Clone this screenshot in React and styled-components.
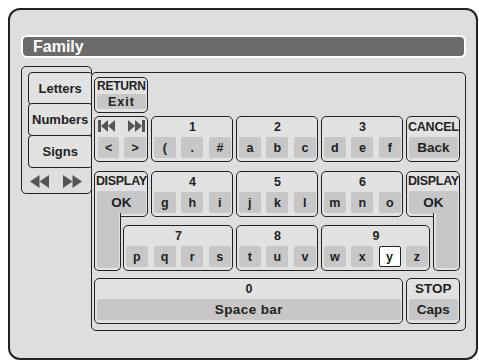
import styled, { createGlobalStyle } from "styled-components"

const GlobalStyle = createGlobalStyle`
  body {
    margin: 0;
    background: #ffffff;
    font-family: "Liberation Sans", Arial, sans-serif;
  }
`

const Frame = styled.div`
  box-sizing: border-box;
  margin: 8px;
  width: 470px;
  height: 352px;
  border: 2px solid #222;
  border-radius: 12px;
  background: #dedede;
  padding: 25px 10px 0 11px;
`
const TitleBar = styled.div`
  box-sizing: border-box;
  height: 23px;
  border: 2px solid #ffffff;
  border-radius: 6px;
  background: #6b6b6b;
  color: #ffffff;
  font-size: 16px;
  font-weight: bold;
  padding-left: 10px;
  display: flex;
  align-items: center;
`
const Body = styled.div`
  display: flex;
  align-items: flex-start;
  margin-top: 8px;
`
const TabPanel = styled.div`
  box-sizing: border-box;
  width: 71.5px;
  height: 128px;
  border: 1.5px solid #222;
  border-radius: 5px;
  padding: 4.5px 0 0 5.5px;
  display: flex;
  flex-direction: column;
`
const Tab = styled.div`
  box-sizing: border-box;
  height: 33px;
  margin-right: -1.5px;
  border: 1.5px solid #222;
  border-radius: 4px;
  background: #e2e2e2;
  display: flex;
  align-items: center;
  justify-content: center;
  font-size: 13px;
  font-weight: bold;
  color: #222;
  & + & {
    margin-top: -1.5px;
  }
`
const Arrows = styled.div`
  display: flex;
  gap: 14px;
  margin: 7px 0 0 2px;
`
const KbPanel = styled.div`
  position: relative;
  box-sizing: border-box;
  width: 376px;
  height: 259px;
  margin: 6px 0 0 -1.5px;
  border: 1.5px solid #222;
  border-radius: 5px;
  background: #dedede;
  padding: 3.5px 0 0 2.5px;
  display: grid;
  grid-template-columns: 26px 25px 82px 82px 82px 24px 27px;
  grid-template-rows: 36px 46px 52px 51px 50px;
  gap: 3px;
`
const Key = styled.div`
  grid-column: ${p => p.$col};
  grid-row: ${p => p.$row};
  align-self: end;
  height: ${p => p.$h || 46}px;
  box-sizing: border-box;
  border: 1.5px solid #222;
  border-radius: 5px;
  background: #e2e2e2;
  display: flex;
  flex-direction: column;
  padding: 0 1.5px 2.5px;
  color: #222;
`
const Label = styled.div`
  flex: 1;
  display: flex;
  align-items: center;
  justify-content: center;
  font-size: ${p => p.$size || 12.5}px;
  font-weight: bold;
  letter-spacing: ${p => p.$ls || 0}px;
  white-space: nowrap;
`
const SubRow = styled.div`
  display: flex;
  justify-content: space-between;
  gap: ${p => p.$gap || 0}px;
  height: 21px;
  padding-left: ${p => p.$pl || 0}px;
`
const Sub = styled.div`
  box-sizing: border-box;
  width: 22px;
  flex: ${p => (p.$grow ? 1 : "none")};
  border-radius: 2px;
  background: ${p => (p.$active ? "#ffffff" : "#c7c7c7")};
  border: ${p => (p.$active ? "1.5px solid #222" : "none")};
  display: flex;
  align-items: center;
  justify-content: center;
  font-size: 12.5px;
  font-weight: bold;
  color: #222;
`
const Pad = styled.div`
  height: ${p => p.$h || 21}px;
  border-radius: 2px;
  background: #c7c7c7;
  display: flex;
  align-items: center;
  justify-content: center;
  font-size: ${p => p.$size || 13.5}px;
  font-weight: bold;
  letter-spacing: ${p => p.$ls || 0}px;
  color: #222;
`
const IconRow = styled.div`
  flex: 1;
  display: flex;
  justify-content: space-between;
  align-items: center;
  padding: 0 1px 1px 1.5px;
`

/* L-shaped DISPLAY key */
const LWrap = styled.div`
  grid-column: ${p => p.$col};
  grid-row: 3 / 5;
  align-self: end;
  height: 100px;
  display: flex;
  flex-direction: column;
  align-items: ${p => (p.$side === "left" ? "flex-start" : "flex-end")};
  color: #222;
`
const LTop = styled.div`
  position: relative;
  box-sizing: border-box;
  width: 100%;
  height: 46px;
  border: 1.5px solid #222;
  border-radius: ${p => (p.$side === "left" ? "5px 5px 5px 0" : "5px 5px 0 5px")};
  background: #e2e2e2;
  display: flex;
  flex-direction: column;
  padding: 0 1.5px 2px;
`
const LTopPad = styled.div`
  height: 22.5px;
  background: #c7c7c7;
  border-radius: ${p => (p.$side === "left" ? "2px 2px 3px 0" : "2px 2px 0 3px")};
  display: flex;
  align-items: center;
  justify-content: center;
  font-size: 13.5px;
  font-weight: bold;
`
const LStem = styled.div`
  position: relative;
  z-index: 1;
  box-sizing: border-box;
  width: 27px;
  flex: 1;
  margin-top: -3.5px;
  border: 1.5px solid #222;
  border-top: none;
  border-radius: 0 0 5px 5px;
  background: #e2e2e2;
  padding: 0 1.5px 1.5px;
  display: flex;
`
const LStemPad = styled.div`
  flex: 1;
  background: #c7c7c7;
  border-radius: 0 0 2px 2px;
`

const DoubleArrow = ({ dir }) => (
  <svg width="19" height="13" viewBox="0 0 19 13">
    {dir === "left" ? (
      <>
        <polygon points="9.5,0 0,6.5 9.5,13" fill="#555" />
        <polygon points="19,0 9.5,6.5 19,13" fill="#555" />
      </>
    ) : (
      <>
        <polygon points="0,0 9.5,6.5 0,13" fill="#555" />
        <polygon points="9.5,0 19,6.5 9.5,13" fill="#555" />
      </>
    )}
  </svg>
)

const SkipIcon = ({ dir }) => (
  <svg width="17" height="12" viewBox="0 0 17 12">
    {dir === "back" ? (
      <>
        <rect x="0" y="0" width="3" height="12" fill="#555" />
        <polygon points="10,0 3,6 10,12" fill="#555" />
        <polygon points="17,0 10,6 17,12" fill="#555" />
      </>
    ) : (
      <>
        <polygon points="0,0 7,6 0,12" fill="#555" />
        <polygon points="7,0 14,6 7,12" fill="#555" />
        <rect x="14" y="0" width="3" height="12" fill="#555" />
      </>
    )}
  </svg>
)

const NumKey = ({ col, row, num, chars, active }) => (
  <Key $col={col} $row={row}>
    <Label>{num}</Label>
    <SubRow>
      {chars.map(c => (
        <Sub key={c} $active={c === active}>{c}</Sub>
      ))}
    </SubRow>
  </Key>
)

const DisplayKey = ({ side, col }) => (
  <LWrap $side={side} $col={col}>
    <LTop $side={side}>
      <Label $size={12.5} $ls={-0.3}>DISPLAY</Label>
      <LTopPad $side={side}>OK</LTopPad>
    </LTop>
    <LStem>
      <LStemPad />
    </LStem>
  </LWrap>
)

const App = () => {
  return (
    <>
      <GlobalStyle />
      <Frame>
        <TitleBar>Family</TitleBar>
        <Body>
          <TabPanel>
            <Tab>Letters</Tab>
            <Tab>Numbers</Tab>
            <Tab>Signs</Tab>
            <Arrows>
              <DoubleArrow dir="left" />
              <DoubleArrow dir="right" />
            </Arrows>
          </TabPanel>
          <KbPanel>
            <Key $col="1 / 3" $row="1" $h={36}>
              <Label $size={12} $ls={-0.2}>RETURN</Label>
              <Pad $h={15} $size={12.5} $ls={1}>Exit</Pad>
            </Key>

            <Key $col="1 / 3" $row="2">
              <IconRow>
                <SkipIcon dir="back" />
                <SkipIcon dir="fwd" />
              </IconRow>
              <SubRow $gap={5} $pl={1}>
                <Sub $grow>&lt;</Sub>
                <Sub $grow>&gt;</Sub>
              </SubRow>
            </Key>
            <NumKey col="3" row="2" num="1" chars={["(", ".", "#"]} />
            <NumKey col="4" row="2" num="2" chars={["a", "b", "c"]} />
            <NumKey col="5" row="2" num="3" chars={["d", "e", "f"]} />
            <Key $col="6 / 8" $row="2">
              <Label $size={12.5} $ls={-0.2}>CANCEL</Label>
              <Pad>Back</Pad>
            </Key>

            <DisplayKey side="left" col="1 / 3" />
            <NumKey col="3" row="3" num="4" chars={["g", "h", "i"]} />
            <NumKey col="4" row="3" num="5" chars={["j", "k", "l"]} />
            <NumKey col="5" row="3" num="6" chars={["m", "n", "o"]} />
            <DisplayKey side="right" col="6 / 8" />

            <NumKey col="2 / 4" row="4" num="7" chars={["p", "q", "r", "s"]} />
            <NumKey col="4" row="4" num="8" chars={["t", "u", "v"]} />
            <NumKey col="5 / 7" row="4" num="9" chars={["w", "x", "y", "z"]} active="y" />

            <Key $col="1 / 6" $row="5">
              <Label>0</Label>
              <Pad $ls={0.4}>Space bar</Pad>
            </Key>
            <Key $col="6 / 8" $row="5">
              <Label $size={13.5}>STOP</Label>
              <Pad>Caps</Pad>
            </Key>
          </KbPanel>
        </Body>
      </Frame>
    </>
  )
}

export default App
